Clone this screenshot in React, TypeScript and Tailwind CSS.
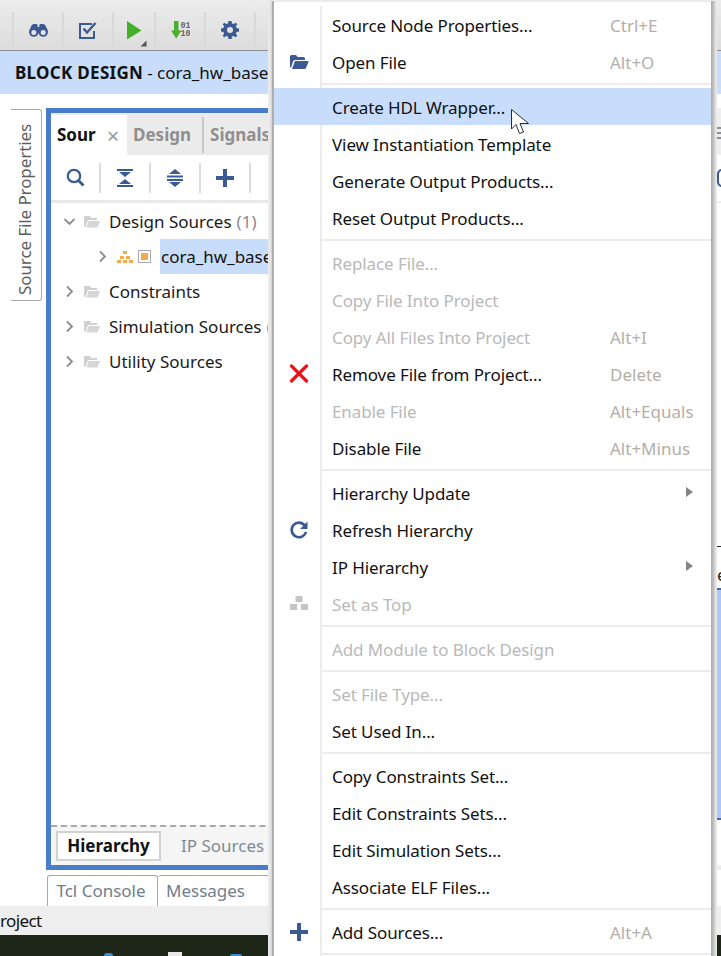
import React from "react";

const FONT = "font-['Noto_Sans','Open_Sans',sans-serif]";

type Row = { t: string; s?: string; d?: boolean; hl?: boolean; icon?: React.ReactNode; sub?: boolean };

const Blue = "#3b5a94";

const FolderOpen = () => (
  <svg width="20" height="18" viewBox="0 0 20 18">
    <path d="M1 3.5 Q1 2 2.5 2 H7 L8.5 4 H14.5 Q16 4 16 5.5 V7 H6 Q4.5 7 4 8.5 L2 15 Q1 14.5 1 13 Z" fill={Blue} />
    <path d="M6 8 H19 Q19.8 8 19.5 9 L17 15 Q16.6 16 15.5 16 H3 Z" fill={Blue} />
  </svg>
);
const RedX = () => (
  <svg width="20" height="20" viewBox="0 0 20 20">
    <path d="M2.5 2 L17.5 17 M17.5 2 L2.5 17" stroke="#e8141c" strokeWidth="3.2" strokeLinecap="round" />
  </svg>
);
const Refresh = () => (
  <svg width="20" height="20" viewBox="0 0 20 20">
    <path d="M15.8 5.5 A7.3 7.3 0 1 0 17 12" fill="none" stroke={Blue} strokeWidth="2.6" />
    <path d="M18.5 1.5 V9 H11 Z" fill={Blue} />
  </svg>
);
const HierGray = () => (
  <svg width="18" height="16" viewBox="0 0 18 16">
    <rect x="5.5" y="0" width="7" height="6" fill="#c4c4c4" />
    <rect x="0" y="8" width="7" height="6" fill="#c4c4c4" />
    <rect x="11" y="8" width="7" height="6" fill="#c4c4c4" />
  </svg>
);
const Plus = ({ size = 18 }: { size?: number }) => (
  <svg width={size} height={size} viewBox="0 0 18 18">
    <rect x="0" y="7" width="18" height="4" fill={Blue} />
    <rect x="7" y="0" width="4" height="18" fill={Blue} />
  </svg>
);

const groups: Row[][] = [
  [
    { t: "Source Node Properties...", s: "Ctrl+E" },
    { t: "Open File", s: "Alt+O", icon: <FolderOpen /> },
  ],
  [
    { t: "Create HDL Wrapper...", hl: true },
    { t: "View Instantiation Template" },
    { t: "Generate Output Products..." },
    { t: "Reset Output Products..." },
  ],
  [
    { t: "Replace File...", d: true },
    { t: "Copy File Into Project", d: true },
    { t: "Copy All Files Into Project", s: "Alt+I", d: true },
    { t: "Remove File from Project...", s: "Delete", icon: <RedX /> },
    { t: "Enable File", s: "Alt+Equals", d: true },
    { t: "Disable File", s: "Alt+Minus" },
  ],
  [
    { t: "Hierarchy Update", sub: true },
    { t: "Refresh Hierarchy", icon: <Refresh /> },
    { t: "IP Hierarchy", sub: true },
    { t: "Set as Top", d: true, icon: <HierGray /> },
  ],
  [{ t: "Add Module to Block Design", d: true }],
  [{ t: "Set File Type...", d: true }, { t: "Set Used In..." }],
  [
    { t: "Copy Constraints Set..." },
    { t: "Edit Constraints Sets..." },
    { t: "Edit Simulation Sets..." },
    { t: "Associate ELF Files..." },
  ],
  [{ t: "Add Sources...", s: "Alt+A", icon: <Plus /> }],
];

function MenuRow({ r }: { r: Row }) {
  return (
    <div
      className={
        "relative flex h-[37px] items-center " +
        (r.hl ? "z-10 bg-[#c8ddfb] " : "") +
        (r.d ? "text-[#b9b9b9]" : "text-[#111]")
      }
    >
      <div className="flex w-[48px] shrink-0 items-center justify-center pl-[2px] pt-[1px]">{r.icon}</div>
      <div className="ml-[10px] w-[278px] shrink-0 whitespace-nowrap pt-[3px] tracking-[-0.1px]">{r.t}</div>
      {r.s ? <div className="whitespace-nowrap pt-[3px] text-[#b3aea8]">{r.s}</div> : null}
      {r.sub ? (
        <div className="ml-[76px] mt-[-2px] h-0 w-0 border-y-[5px] border-l-[7px] border-y-transparent border-l-[#858585]" />
      ) : null}
    </div>
  );
}

function Menu() {
  return (
    <div className="absolute left-[268px] top-0 flex h-[956px] w-[449px]">
      <div className="mt-[1px] w-[6px] bg-[linear-gradient(to_right,#ececec_0%,#e2e2e2_55%,#a9a9a9_70%,#b5b5b5_100%)]" />
      <div className="relative mt-[2px] w-[437px] bg-white pt-[4px] text-[17px] leading-[24px]">
        <div className="absolute bottom-0 left-[46px] top-[4px] w-[2px] bg-[#ececec]" />
        {groups.map((g, i) => (
          <div key={i}>
            {g.map((r) => (
              <MenuRow key={r.t} r={r} />
            ))}
            <div className="relative my-[3px] ml-[46px] h-[2px] bg-[#ececec]" />
          </div>
        ))}
      </div>
      <div className="mt-[1px] w-[6px] bg-[linear-gradient(to_right,#a9a9a9_0%,#bdbdbd_35%,#dcdcdc_70%,#eeeeee_100%)]" />
    </div>
  );
}

const Cursor = () => (
  <svg className="absolute left-[510px] top-[108px] z-20" width="22" height="28" viewBox="0 0 22 28">
    <path
      d="M1.5 1.5 V21 L6 16.5 L9.5 25.5 L13.5 24 L10 15.5 L18.5 15.5 Z"
      fill="#fff"
      stroke="#2c2c2c"
      strokeWidth="1"
      strokeLinejoin="round"
    />
  </svg>
);

const TbSep = () => <div className="h-[36px] w-[2px] bg-[#d9d9d9]" />;

const Binoculars = () => (
  <svg width="19" height="13" viewBox="0 0 19 13">
    <path d="M2.5 1.5 Q3 0 5 0 H7.5 Q8.5 0 8.7 1.5 V3 H10.3 V1.5 Q10.5 0 11.5 0 H14 Q16 0 16.5 1.5 L18.3 6 H0.7 Z" fill={Blue} />
    <circle cx="4.8" cy="8" r="4.8" fill={Blue} />
    <circle cx="14.2" cy="8" r="4.8" fill={Blue} />
    <rect x="8" y="5" width="3" height="4" fill={Blue} />
    <circle cx="4.8" cy="8.4" r="2.5" fill="#e6e6ea" />
    <circle cx="14.2" cy="8.4" r="2.5" fill="#e6e6ea" />
  </svg>
);
const CheckBox = () => (
  <svg width="18" height="17" viewBox="0 0 18 17">
    <path d="M13 2 H1 V16 H15 V9" fill="none" stroke={Blue} strokeWidth="2" />
    <path d="M4.5 6.5 L8 10.5 L16.5 1" fill="none" stroke={Blue} strokeWidth="2.4" />
  </svg>
);
const Play = () => (
  <svg width="20" height="26" viewBox="0 0 20 26">
    <path d="M0 0 L14.5 9.5 L0 18.5 Z" fill="#43b02a" />
    <path d="M19.5 19.5 V25.5 H13.5 Z" fill="#555" />
  </svg>
);
const Bitstream = () => (
  <svg width="19" height="18" viewBox="0 0 19 18">
    <path d="M3 0 H7.5 V9.5 H10.5 L5.25 17.5 L0 9.5 H3 Z" fill="#49b02d" />
    <text x="9.5" y="6.5" fontFamily="'Liberation Mono',monospace" fontWeight="700" fontSize="8.5" fill="#666">01</text>
    <text x="9.5" y="14.5" fontFamily="'Liberation Mono',monospace" fontWeight="700" fontSize="8.5" fill="#666">10</text>
  </svg>
);
const Gear = () => (
  <svg width="18" height="18" viewBox="0 0 18 18">
    <path
      d="M7.4 0 H10.6 L11 2.4 L12.7 3.1 L14.7 1.7 L16.3 3.3 L14.9 5.3 L15.6 7 L18 7.4 V10.6 L15.6 11 L14.9 12.7 L16.3 14.7 L14.7 16.3 L12.7 14.9 L11 15.6 L10.6 18 H7.4 L7 15.6 L5.3 14.9 L3.3 16.3 L1.7 14.7 L3.1 12.7 L2.4 11 L0 10.6 V7.4 L2.4 7 L3.1 5.3 L1.7 3.3 L3.3 1.7 L5.3 3.1 L7 2.4 Z M9 6 A3 3 0 1 0 9 12 A3 3 0 1 0 9 6 Z"
      fill={Blue}
      fillRule="evenodd"
    />
  </svg>
);
const Search = () => (
  <svg width="19" height="19" viewBox="0 0 19 19">
    <circle cx="8" cy="8" r="6.2" fill="none" stroke={Blue} strokeWidth="2.2" />
    <path d="M12.5 12.5 L17.5 17.5" stroke={Blue} strokeWidth="2.8" />
  </svg>
);
const Collapse = () => (
  <svg width="16" height="18" viewBox="0 0 16 18">
    <rect x="0" y="0" width="16" height="2" fill={Blue} />
    <path d="M2 3 H14 L8 8 Z" fill={Blue} />
    <path d="M2 15 H14 L8 10 Z" fill={Blue} />
    <rect x="0" y="16" width="16" height="2" fill={Blue} />
  </svg>
);
const Expand = () => (
  <svg width="16" height="18" viewBox="0 0 16 18">
    <path d="M8 0 L14 5 H2 Z" fill={Blue} />
    <rect x="0" y="6.5" width="16" height="2" fill={Blue} />
    <rect x="0" y="10" width="16" height="2" fill={Blue} />
    <path d="M8 18 L14 13 H2 Z" fill={Blue} />
  </svg>
);
const GrayFolder = () => (
  <svg width="16" height="14" viewBox="0 0 16 14">
    <path d="M0 2 Q0 1 1 1 H6 L7 3 H13 V5 H4 L1.5 12 H1 Q0 12 0 11 Z" fill="#d0d0d0" />
    <path d="M4.5 6 H16 L13.5 12.5 H2.5 Z" fill="#d6d6d6" />
  </svg>
);
const Chevron = ({ down }: { down?: boolean }) => (
  <svg width="13" height="13" viewBox="0 0 13 13" className="shrink-0">
    <path
      d={down ? "M1.5 4 L6.5 9 L11.5 4" : "M4 1.5 L9 6.5 L4 11.5"}
      fill="none"
      stroke="#8c8c8c"
      strokeWidth="1.8"
    />
  </svg>
);
const HierOrange = () => (
  <svg width="16" height="14" viewBox="0 0 16 14">
    {[
      [6, 1],
      [3, 6],
      [9, 6],
      [0, 10],
      [6, 10],
      [12, 10],
    ].map(([x, y]) => (
      <rect key={`${x}-${y}`} x={x} y={y} width="4" height="3" fill="#f5a94a" />
    ))}
  </svg>
);

function TreeRow({ label, count }: { label: string; count?: string }) {
  return (
    <div className="flex h-[35px] items-center">
      <Chevron down={label === "Design Sources"} />
      <div className="ml-[8px] flex">
        <GrayFolder />
      </div>
      <span className="ml-[9px] whitespace-nowrap text-[#1a1a1a]">{label}</span>
      {count ? <span className="ml-[5px] whitespace-nowrap text-[#8a8a8a]">{count}</span> : null}
    </div>
  );
}

function RightStrip() {
  return (
    <div className="flex h-[780px] w-[4px] shrink-0 flex-col overflow-hidden">
      <div className="h-[14px] shrink-0" />
      <div className="flex h-[47px] shrink-0 flex-col gap-[3px] bg-[#eeeeee] pt-[19px]">
        <div className="h-[2px] bg-[#8a8f99]" />
        <div className="h-[2px] bg-[#8a8f99]" />
        <div className="h-[2px] bg-[#8a8f99]" />
      </div>
      <div className="h-[14px] shrink-0" />
      <div className="h-[18px] w-[10px] shrink-0 rounded-full border-2 border-[#3b5a94]" />
      <div className="h-[14px] shrink-0" />
      <div className="h-[2px] shrink-0 bg-[#ececec]" />
      <div className="h-[343px] shrink-0" />
      <div className="h-[1px] shrink-0 bg-[#1f2d3d]" />
      <div className="h-[41px] shrink-0 pt-[18px] text-[17px] leading-[20px] text-[#222]">e</div>
      <div className="h-[232px] shrink-0 border-y-2 border-[#4468b0] bg-[#adc8f5]" />
      <div className="h-[45px] shrink-0" />
      <div className="h-[5px] shrink-0 bg-[#ebebeb]" />
    </div>
  );
}

export default function App() {
  return (
    <div className={"relative h-[956px] w-[721px] overflow-hidden bg-white text-[17px] leading-[24px] " + FONT}>
      {/* main toolbar */}
      <div className="flex h-[50px] items-center bg-[linear-gradient(#ececec,#dcdcdc)] pl-[12px] pt-[10px]">
        <TbSep />
        <div className="flex w-[48px] justify-center"><Binoculars /></div>
        <TbSep />
        <div className="flex w-[48px] justify-center"><CheckBox /></div>
        <TbSep />
        <div className="flex w-[40px] justify-center pl-[6px] pt-[7px]"><Play /></div>
        <TbSep />
        <div className="flex w-[48px] justify-center"><Bitstream /></div>
        <TbSep />
        <div className="flex w-[48px] justify-center"><Gear /></div>
        <TbSep />
      </div>
      <div className="h-[1px] bg-[#8e8e8e]" />
      {/* block design header */}
      <div className="flex h-[43px] items-center bg-[#c8ddfb] pl-[15px] text-[#111]">
        <span className="font-bold tracking-[0.3px]">BLOCK DESIGN</span>
        <span className="ml-[4px] whitespace-nowrap">- cora_hw_base</span>
      </div>
      {/* body */}
      <div className="flex h-[780px]">
        <div className="flex w-[717px] shrink-0 pt-[14px]">
          <div className="ml-[11px] mt-[1px] flex h-[192px] w-[31px] items-center justify-center rounded-r-[3px] border-y border-r border-[#a8a8a8] pt-[8px]">
            <span className="mr-[2px] rotate-180 whitespace-nowrap tracking-[-0.1px] text-[#5c5c5c] [writing-mode:vertical-rl]">
              Source File Properties
            </span>
          </div>
          <div className="ml-[4px] flex h-[762px] w-[671px] flex-col border-[5px] border-[#4a7ccc] bg-white">
            <div className="flex h-[42px] items-center bg-[#ebebeb] pt-[2px]">
              <div className="flex h-full w-[76px] items-center bg-white pl-[6px] font-bold text-[#111]">
                Sour
                <span className="ml-[11px] text-[22px] font-normal text-[#9a9a9a]">×</span>
              </div>
              <span className="ml-[6px] font-bold text-[#8f8f8f]">Design</span>
              <div className="ml-[11px] h-[36px] w-[2px] bg-[#c8c8c8]" />
              <span className="ml-[6px] font-bold text-[#8f8f8f]">Signals</span>
            </div>
            <div className="flex h-[48px] items-center border-b-[3px] border-[#e8e8e8] pl-[15px]">
              <Search />
              <div className="ml-[14px] h-[30px] w-[2px] bg-[#dcdcdc]" />
              <div className="ml-[16px]"><Collapse /></div>
              <div className="ml-[16px] h-[30px] w-[2px] bg-[#dcdcdc]" />
              <div className="ml-[16px]"><Expand /></div>
              <div className="ml-[16px] h-[30px] w-[2px] bg-[#dcdcdc]" />
              <div className="ml-[15px]"><Plus size={18} /></div>
              <div className="ml-[15px] h-[30px] w-[2px] bg-[#dcdcdc]" />
            </div>
            <div className="min-h-0 flex-1 pl-[12px] pt-[1px]">
              <TreeRow label="Design Sources" count="(1)" />
              <div className="flex h-[35px] items-center pl-[33px]">
                <Chevron />
                <div className="ml-[8px] flex"><HierOrange /></div>
                <div className="ml-[5px] flex h-[13px] w-[13px] items-center justify-center border border-[#a8a8a8]">
                  <div className="h-[7px] w-[7px] bg-[#f5a94a]" />
                </div>
                <div className="ml-[9px] flex h-[35px] w-[130px] items-center bg-[#c8ddfb] pl-[1px] whitespace-nowrap text-[#111]">
                  cora_hw_base
                </div>
              </div>
              <TreeRow label="Constraints" />
              <TreeRow label="Simulation Sources" count="(" />
              <TreeRow label="Utility Sources" />
            </div>
            <div className="flex h-[40px] items-center border-t-2 border-dashed border-[#a8a8a8] bg-[#f5f5f5] pl-[5px]">
              <div className="flex h-[30px] w-[105px] items-center justify-center border-2 border-[#d2d2d2] bg-white font-bold text-[#111]">
                Hierarchy
              </div>
              <span className="ml-[20px] whitespace-nowrap text-[#7d8a96]">IP Sources</span>
            </div>
          </div>
        </div>
        <RightStrip />
      </div>
      {/* bottom tabs */}
      <div className="flex h-[32px] items-end pl-[47px]">
        <div className="flex h-[31px] w-[111px] items-center justify-center rounded-t-[3px] border-x border-t border-[#a8a8a8] pr-[3px] text-[#6f7e8c]">
          Tcl Console
        </div>
        <div className="flex h-[31px] w-[120px] items-center rounded-t-[3px] border-t border-r border-[#a8a8a8] pl-[8px] text-[#6f7e8c]">
          Messages
        </div>
      </div>
      <div className="flex h-[29px] items-center bg-[#eeeeee] pl-0 tracking-[-0.6px] text-[#111]">roject</div>
      <div className="flex h-[21px] items-end overflow-hidden bg-[#1d2617] pl-[104px]">
        <div className="h-[3px] w-[9px] rounded-t-full bg-[#3b8fd0]" />
        <div className="ml-[55px] h-[4px] w-[14px] bg-[#e8e8e8]" />
        <div className="ml-[48px] h-[2px] w-[12px] rounded-t-full bg-[#3b8fd0]" />
      </div>

      <Menu />
      <Cursor />
    </div>
  );
}
